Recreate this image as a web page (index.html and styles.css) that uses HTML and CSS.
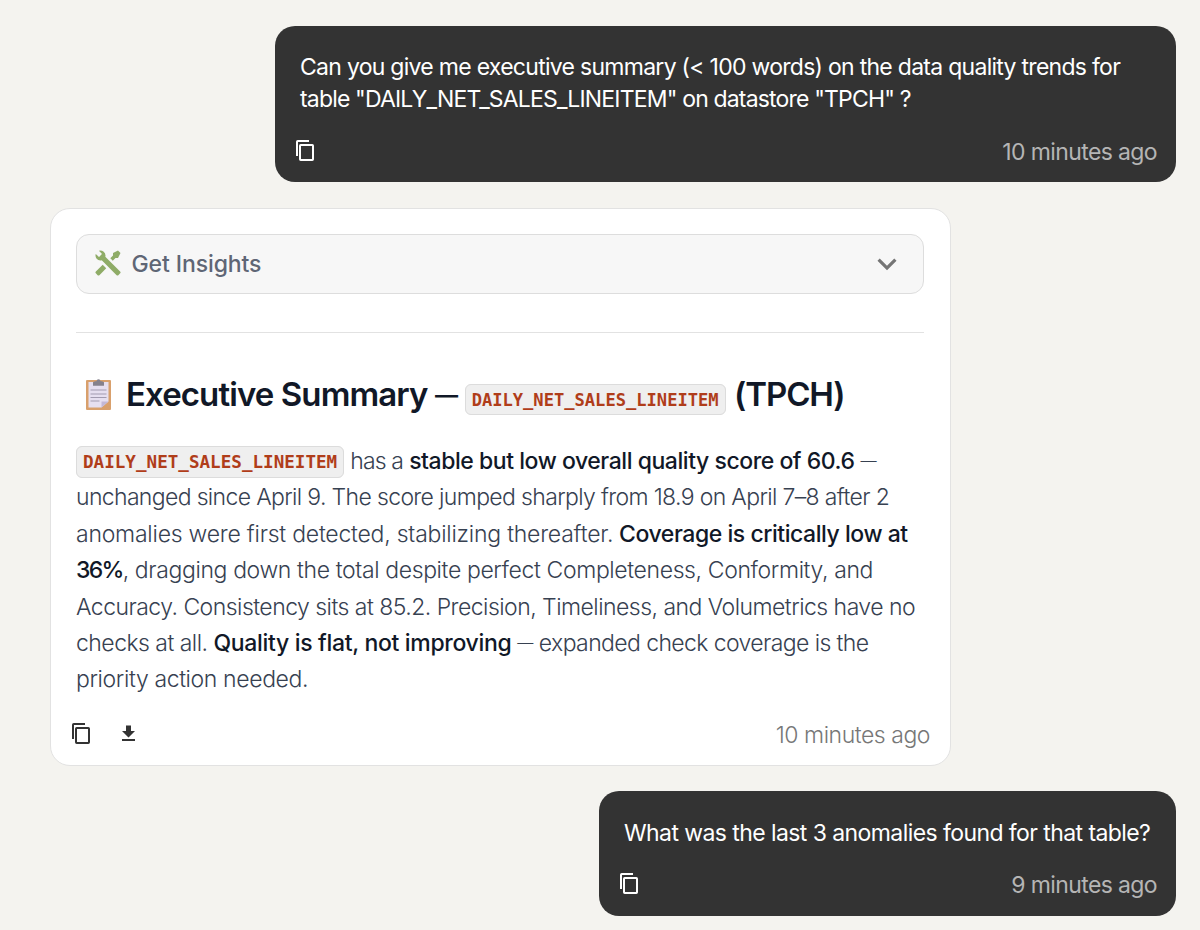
FILE: index.html
```
<!DOCTYPE html>
<html lang="en">
<head>
  <meta charset="UTF-8">
  <meta name="viewport" content="width=device-width, initial-scale=1.0">
  <title>Chat</title>
  <link rel="stylesheet" href="styles.css">
</head>
<body>
  <div class="chat">
    <div class="message user">
      <p class="question"><span class="q1">Can you give me executive summary (&lt; 100 words) on the data quality trends for</span><br><span class="q2">table "DAILY_NET_SALES_LINEITEM" on datastore "TPCH" ?</span></p>
      <div class="footer">
        <svg class="icon copy" viewBox="0 0 22 22"><rect x="5" y="5" width="13" height="15" rx=".7"/><path d="M2 16V1.8a.8.8 0 0 1 .8-.8H14"/></svg>
        <span class="time">10 minutes ago</span>
      </div>
    </div>

    <div class="message bot">
      <div class="tool">
        <svg class="tool-icon" viewBox="0 0 24 24"><path d="m21.71 20.29-1.42 1.42a1 1 0 0 1-1.41 0L7 9.85A3.81 3.81 0 0 1 6 10a4 4 0 0 1-3.78-5.3l2.54 2.54.53-.53 1.42-1.42.53-.53L4.7 2.22A4 4 0 0 1 10 6a3.81 3.81 0 0 1-.15 1l11.86 11.88a1 1 0 0 1 0 1.41M2.29 18.88a1 1 0 0 0 0 1.41l1.42 1.42a1 1 0 0 0 1.41 0l5.47-5.46-2.83-2.83M20 2l-4 2v2l-2.17 2.17 2 2L18 8h2l2-4z"/></svg>
        <span class="tool-name">Get Insights</span>
        <svg class="chevron" viewBox="0 0 24 24"><path d="M7.41 8.58 12 13.17l4.59-4.59L18 10l-6 6-6-6z"/></svg>
      </div>
      <h2>
        <svg class="clipboard" viewBox="0 0 25 31">
          <rect fill="#d9a06c" width="25" height="30" y="1" rx="1"/>
          <path fill="#e6dff0" d="M2.5 3h20v19.5l-7 6h-13z"/>
          <path fill="#c3b8d6" d="M15.5 28.5v-6h7z"/>
          <path fill="#85818c" d="M7 6.8V3.2l2-1h1.5a2 2 0 0 1 4 0H16l2 1v3.6z"/>
          <path stroke="#a29bb0" d="M4.5 11h16M4.5 15h16M4.5 18.5h16M4.5 22h9"/>
        </svg>
        <span class="title">Executive Summary</span> <span class="dash">—</span>
        <code>DAILY_NET_SALES_LINEITEM</code>
        <span class="store">(TPCH)</span>
      </h2>
      <p class="summary">
        <code>DAILY_NET_SALES_LINEITEM</code> <span class="s1">has a</span> <strong>stable but low overall quality score of 60.6</strong> <span class="dash">—</span><br>
        <span class="s2">unchanged since April 9. The score jumped sharply from 18.9 on April 7–8 after 2</span><br>
        <span class="s3">anomalies were first detected, stabilizing thereafter.</span> <strong>Coverage is critically low at</strong><br>
        <strong class="percent">36%</strong><span class="s4">, dragging down the total despite perfect Completeness, Conformity, and</span><br>
        Accuracy. Consistency sits at 85.2. Precision, Timeliness, and Volumetrics have no<br>
        checks at all. <strong class="flat">Quality is flat, not improving</strong> <span class="dash">—</span><span class="s6"> expanded check coverage is the</span><br>
        <span class="s7">priority action needed.</span>
      </p>
      <div class="footer">
        <svg class="icon copy" viewBox="0 0 22 22"><rect x="5" y="5" width="13" height="15" rx=".7"/><path d="M2 16V1.8a.8.8 0 0 1 .8-.8H14"/></svg>
        <svg class="icon download" viewBox="0 0 22 22"><path d="M7 2.5h5V8h4l-6.5 6.500L3 8h4zM3 16h13v2H3z"/></svg>
        <span class="time">10 minutes ago</span>
      </div>
    </div>

    <div class="message user short">
      <p class="question">What was the last 3 anomalies found for that table?</p>
      <div class="footer">
        <svg class="icon copy" viewBox="0 0 22 22"><rect x="5" y="5" width="13" height="15" rx=".7"/><path d="M2 16V1.8a.8.8 0 0 1 .8-.8H14"/></svg>
        <span class="time">9 minutes ago</span>
      </div>
    </div>
  </div>
</body>
</html>
```
FILE: styles.css
```
body {
  margin: 0;
  background: #f4f3ef;
  font-family: Inter, "Noto Sans", sans-serif;
  font-size: 23px;
}
.chat {
  display: flex;
  flex-direction: column;
  gap: 26px;
  padding: 26px 24px 14px 50px;
}
.message {
  box-sizing: border-box;
  width: 901px;
  border-radius: 20px;
}
.user {
  align-self: flex-end;
  padding: 25px 19px 14px 20px;
  background: #333;
  color: #fff;
}
.short {
  width: 577px;
  margin-top: -1px;
  padding: 26px 19px 15px 20px;
}
.bot {
  padding: 25px 20px 14px 20px;
  border: 1px solid #e2e2e2;
  background: #fff;
  color: #374151;
}
p {
  margin: 0;
  white-space: nowrap;
}
.question {
  padding: 0 5px;
  line-height: 32px;
  letter-spacing: -0.58px;
}
.q1 {
  letter-spacing: -0.72px;
}
.q2 {
  letter-spacing: -0.83px;
}
.footer {
  display: flex;
  align-items: center;
  height: 32px;
  margin-top: 21px;
}
.short .footer {
  margin-top: 20px;
}
.icon {
  width: 22px;
  height: 22px;
  margin-bottom: 2px;
}
.copy {
  fill: none;
  stroke: #fff;
  stroke-width: 2;
}
.bot .copy {
  stroke: #333;
}
.download {
  margin-left: 26px;
  fill: #333;
}
.time {
  margin-left: auto;
  color: #b5b5b5;
  letter-spacing: -0.62px;
}
.bot .time {
  color: #777;
  font-weight: 300;
  letter-spacing: -0.46px;
}
.tool {
  display: flex;
  align-items: center;
  box-sizing: border-box;
  height: 60px;
  margin: 0 6px 38px 5px;
  padding: 0 17px 0 16px;
  border: 1px solid #ddd;
  border-radius: 13px;
  background: #f7f7f7;
}
.tool-icon {
  width: 30px;
  height: 30px;
  margin: 0 8.5px 2px 0;
  fill: #8fac67;
}
.tool-name {
  color: #5f6675;
  font-weight: 500;
  letter-spacing: -0.1px;
}
.chevron {
  width: 38px;
  height: 38px;
  margin: 0 0 1px auto;
  fill: #757575;
}
h2 {
  margin: 0 6px 0 5px;
  padding: 37px 0 0 10px;
  border-top: 1px solid #e2e2e2;
  color: #111827;
  font-size: 33px;
  font-weight: 600;
  line-height: 48px;
  letter-spacing: -0.9px;
  white-space: nowrap;
}
.clipboard {
  width: 25px;
  height: 31px;
  margin-right: 7.5px;
  vertical-align: -4px;
  fill: none;
}
.dash {
  font-size: 0.7em;
  line-height: 0;
  vertical-align: 0.14em;
}
.store {
  margin-left: 1px;
  letter-spacing: -1.1px;
}
code {
  padding: 5px 6px;
  border: 1px solid #dcdcdc;
  border-radius: 6px;
  background: #efefef;
  color: #b03d1a;
  font-family: "DejaVu Sans Mono", monospace;
  font-size: 17.6px;
  font-weight: 700;
  line-height: 1;
  letter-spacing: 0;
}
h2 code {
  padding-bottom: 4px;
  font-size: 17.1px;
}
.summary {
  margin: 25px 0 0 5px;
  font-weight: 300;
  line-height: 36.4px;
  letter-spacing: -0.53px;
}
.summary code {
  vertical-align: 1px;
}
strong {
  color: #111827;
  font-weight: 550;
  letter-spacing: -0.45px;
}
.s1 {
  letter-spacing: -0.83px;
}
.s2 {
  letter-spacing: -0.65px;
}
.s3 {
  letter-spacing: -0.23px;
}
.s4,
.s7 {
  letter-spacing: -0.38px;
}
.percent {
  letter-spacing: -1.7px;
}
.flat {
  letter-spacing: -0.32px;
}
.s6 {
  letter-spacing: -0.6px;
}
```
